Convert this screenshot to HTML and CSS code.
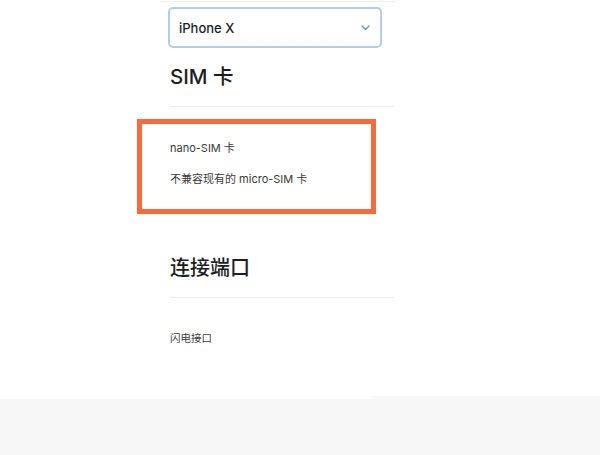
FILE: index.html
```html
<!DOCTYPE html>
<html lang="zh-CN">
<head>
<meta charset="utf-8">
<link rel="stylesheet" href="styles.css">
</head>
<body>
<div class="topline"></div>
<main class="column">
  <div class="select">
    <span class="select-label">iPhone X</span>
    <svg class="chevron" width="9" height="6" viewBox="0 0 9 6"><path d="M1 1l3.5 3.5L8 1" fill="none" stroke="#5b8fc7" stroke-width="1.3" stroke-linecap="round" stroke-linejoin="round"/></svg>
  </div>
  <h2 class="heading h-sim">SIM 卡</h2>
  <div class="divider"></div>
  <p class="text t-nano">nano-SIM 卡</p>
  <p class="text t-micro">不兼容现有的 micro-SIM 卡</p>
  <h2 class="heading h-port">连接端口</h2>
  <div class="divider"></div>
  <p class="text t-light">闪电接口</p>
</main>
<footer class="footer">
  <div class="foot-left"></div>
  <div class="foot-right"></div>
</footer>
<div class="highlight"></div>
</body>
</html>
```

FILE: styles.css
```css
html, body {
  margin: 0;
  padding: 0;
  background: #ffffff;
}
body {
  font-family: Inter, "Noto Sans CJK SC", sans-serif;
  color: #333;
  position: relative;
  height: 455px;
  overflow: hidden;
}
.topline {
  margin: 1px 0 0 160px;
  width: 236px;
  height: 1px;
  background: #f1f1f1;
}
.column {
  margin-left: 168px;
  width: 226px;
}
.select {
  box-sizing: border-box;
  margin-top: 5px;
  width: 214px;
  height: 41px;
  border: 2px solid #aecff0;
  border-radius: 5px;
  display: flex;
  align-items: center;
  justify-content: space-between;
  padding: 0 10px 0 9px;
}
.select-label {
  font-size: 13px;
  font-weight: 500;
  color: #1d1d1f;
}
.chevron {
  display: block;
  margin-top: 1px;
}
.heading {
  margin: 0 0 0 2px;
  font-size: 20px;
  line-height: 24px;
  font-weight: 500;
  color: #1d1d1f;
}
.h-sim {
  margin-top: 17px;
  font-size: 20.5px;
}
.h-port {
  margin-top: 69px;
}
.divider {
  margin: 17px 0 0 2px;
  height: 1px;
  background: #ececec;
}
.text {
  margin: 0 0 0 2px;
  font-size: 11px;
  line-height: 16px;
  color: #3a3a3a;
}
.t-nano {
  margin-top: 33px;
}
.t-micro {
  margin-top: 15px;
}
.t-light {
  margin-top: 33px;
  font-size: 10.5px;
}
.footer {
  margin-top: 49px;
  display: flex;
  align-items: flex-end;
  height: 59px;
}
.foot-left {
  width: 372px;
  height: 56px;
  background: #f7f7f7;
}
.foot-right {
  flex: 1;
  height: 59px;
  background: #f7f7f7;
}
.highlight {
  position: absolute;
  left: 137px;
  top: 119px;
  width: 239px;
  height: 95px;
  box-sizing: border-box;
  border: 5px solid #f46c3e;
}
```
